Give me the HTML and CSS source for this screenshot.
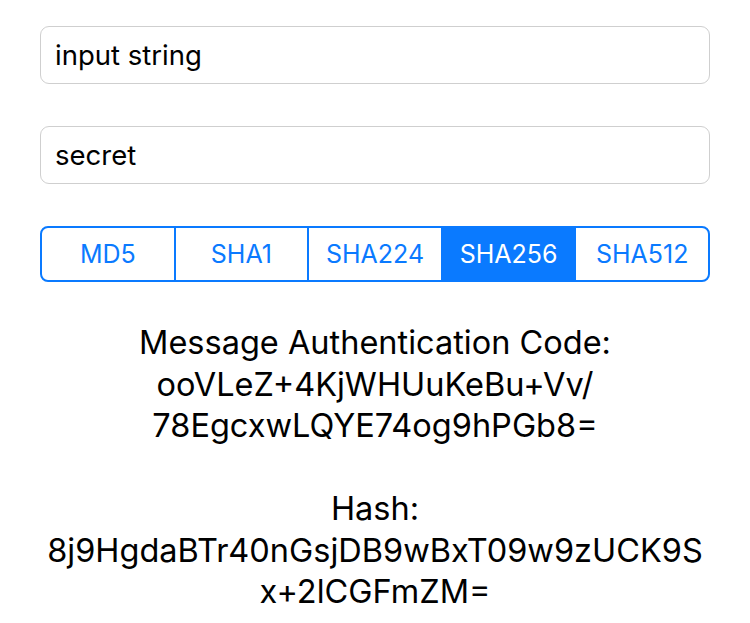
FILE: index.html
```html
<!doctype html>
<html lang="en-us">
  <head>
    <meta charset="utf-8">
    <title>HMAC</title>
    <link rel="stylesheet" href="styles.css">
  </head>
  <body>
    <div class="screen">
      <div class="field">input string</div>
      <div class="field">secret</div>

      <div class="segmented">
        <div class="segment">MD5</div>
        <div class="segment">SHA1</div>
        <div class="segment">SHA224</div>
        <div class="segment selected">SHA256</div>
        <div class="segment">SHA512</div>
      </div>

      <p class="result">Message Authentication Code:<br>ooVLeZ+4KjWHUuKeBu+Vv/<br>78EgcxwLQYE74og9hPGb8=<br><br>Hash:<br>8j9HgdaBTr40nGsjDB9wBxT09w9zUCK9S<br>x+2lCGFmZM=</p>
    </div>
  </body>
</html>
```

FILE: styles.css
```css
body {
    margin: 0;
    padding: 0;
    background-color: #fff;
    font-family: Inter, "Liberation Sans", sans-serif;
    color: #000;
}

.screen {
    display: flex;
    flex-direction: column;
    gap: 42px;
    padding: 26px 40px 0 40px;
}

.field {
    height: 58px;
    box-sizing: border-box;
    border: 1px solid #cfcfcf;
    border-radius: 9px;
    padding: 0 14px;
    display: flex;
    align-items: center;
    font-size: 27.5px;
}

.segmented {
    display: flex;
    height: 56px;
    box-sizing: border-box;
    border: 2px solid #0a7aff;
    border-radius: 8px;
    overflow: hidden;
}

.segment {
    flex: 1;
    display: flex;
    align-items: center;
    justify-content: center;
    font-size: 25px;
    color: #0a7aff;
    border-left: 2px solid #0a7aff;
}

.segment:first-child {
    border-left: none;
}

.segment.selected {
    background-color: #0a7aff;
    color: #fff;
}

.result {
    margin: -2px 0 0 0;
    text-align: center;
    font-size: 32.5px;
    line-height: 41.5px;
}
```
